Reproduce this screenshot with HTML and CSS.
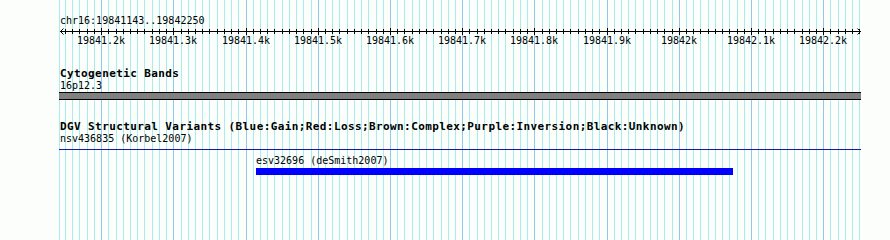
FILE: index.html
```html
<!DOCTYPE html>
<html>
<head>
	<meta charset="utf-8">
	<meta name="viewport" content="width=device-width, initial-scale=1.0">
	<title>chr16:19841143..19842250</title>

	<!-- 样式 -->
	<link rel="stylesheet" href="styles.css">
</head>
<body>
	<div class="panel" data-start="19841143" data-end="19842250">

		<!-- 背景网格 -->
		<svg class="grid" width="890" height="240"></svg>

		<!-- 标尺 -->
		<div class="ruler">
			<div class="pos">chr16:19841143..19842250</div>
			<svg class="axis" width="890" height="8"></svg>
			<div class="ticks"></div>
		</div>

		<!-- 染色体带 -->
		<div class="track">
			<div class="title">Cytogenetic Bands</div>
			<div class="name">16p12.3</div>
			<div class="band"></div>
		</div>

		<!-- 结构变异 -->
		<div class="track">
			<div class="title">DGV Structural Variants (Blue:Gain;Red:Loss;Brown:Complex;Purple:Inversion;Black:Unknown)</div>
			<div class="name">nsv436835 (Korbel2007)</div>
			<div class="span"></div>
			<div class="feature" data-start="19841414" data-end="19842075">
				<div class="name">esv32696 (deSmith2007)</div>
				<div class="bar"></div>
			</div>
		</div>
	</div>


	<script type="text/javascript">
		var panel = document.querySelector('.panel')
		var grid = document.querySelector('.grid')
		var axis = document.querySelector('.axis')
		var ticks = document.querySelector('.ticks')

		var start = panel.dataset.start - 0
		var end = panel.dataset.end - 0
		var left = 60
		var width = 800

		// 碱基位置 -> 像素
		function xOf(pos){
			return Math.round(left + (pos - start) * width / (end - start + 1))
		}

		function line(svg, x1, y1, x2, y2, color){
			var l = document.createElementNS('http://www.w3.org/2000/svg', 'line')
			l.setAttribute('x1', x1)
			l.setAttribute('y1', y1)
			l.setAttribute('x2', x2)
			l.setAttribute('y2', y2)
			l.setAttribute('stroke', color)
			svg.appendChild(l)
		}

		// 网格线 + 刻度
		line(grid, 59.5, 0, 59.5, 240, '#a8ecee')
		for (var pos = Math.ceil(start / 10) * 10; pos <= end; pos += 10) {
			var x = xOf(pos) + 0.5
			var major = pos % 100 === 0
			line(grid, x, 0, x, 240, major ? '#8ec8ea' : '#a8ecee')
			line(axis, x, major ? 1 : 2, x, major ? 8 : 7, '#000')

			if (major) {
				var label = document.createElement('span')
				label.innerText = (pos / 1000) + 'k'
				label.style.left = (x - 0.5) + 'px'
				ticks.appendChild(label)
			}
		}

		// 轴线和箭头
		line(axis, 60, 4.5, 861, 4.5, '#000')
		line(axis, 60.5, 4.5, 63.5, 1.5, '#000')
		line(axis, 60.5, 4.5, 63.5, 7.5, '#000')
		line(axis, 860.5, 4.5, 857.5, 1.5, '#000')
		line(axis, 860.5, 4.5, 857.5, 7.5, '#000')

		// 特征位置
		var features = document.querySelectorAll('.feature')
		for (var i = 0; i < features.length; i++) {
			var f = features[i]
			var x1 = xOf(f.dataset.start - 0)
			var x2 = xOf(f.dataset.end - 0)
			f.style.marginLeft = x1 + 'px'
			f.querySelector('.bar').style.width = (x2 - x1) + 'px'
		}
	</script>
</body>
</html>
```

FILE: styles.css
```css
	* {
		margin: 0;
		padding: 0;
	}

	body {
		background-color: #fbfefb;
		font-family: "DejaVu Sans Mono", "Liberation Mono", monospace;
		font-size: 10px;
		line-height: 12px;
		color: #000;
	}

	.panel {
		width: 890px;
		height: 240px;
		position: relative;
		z-index: 0;
		overflow: hidden;
	}

	/* 网格在内容下面 */
	.grid {
		position: absolute;
		left: 0;
		top: 0;
		z-index: -1;
	}

	svg {
		display: block;
	}

	/* 标尺 */
	.ruler {
		padding-top: 15px;
	}

	.ruler .pos {
		padding-left: 60px;
	}

	.ruler .ticks {
		height: 12px;
		position: relative;
	}

	.ruler .ticks span {
		position: absolute;
		top: 0;
		transform: translateX(-50%);
		white-space: nowrap;
	}

	/* 轨道 */
	.track {
		margin-top: 21px;
	}

	.track .title {
		padding-left: 60px;
		font-weight: bold;
		font-size: 11px;
		letter-spacing: 0.4px;
		white-space: nowrap;
	}

	.track > .name {
		padding-left: 60px;
		white-space: nowrap;
	}

	.band {
		margin-left: 59px;
		width: 802px;
		height: 6px;
		background-color: #808080;
		border-top: 1px solid #000;
		border-bottom: 1px solid #000;
	}

	.span {
		margin: 4px 0 0 59px;
		width: 802px;
		height: 1px;
		background-color: #1818a8;
	}

	.feature {
		margin-top: 5px;
	}

	.feature .name {
		white-space: nowrap;
	}

	.feature .bar {
		margin-top: 1px;
		height: 7px;
		background-color: #0000ff;
	}
```
